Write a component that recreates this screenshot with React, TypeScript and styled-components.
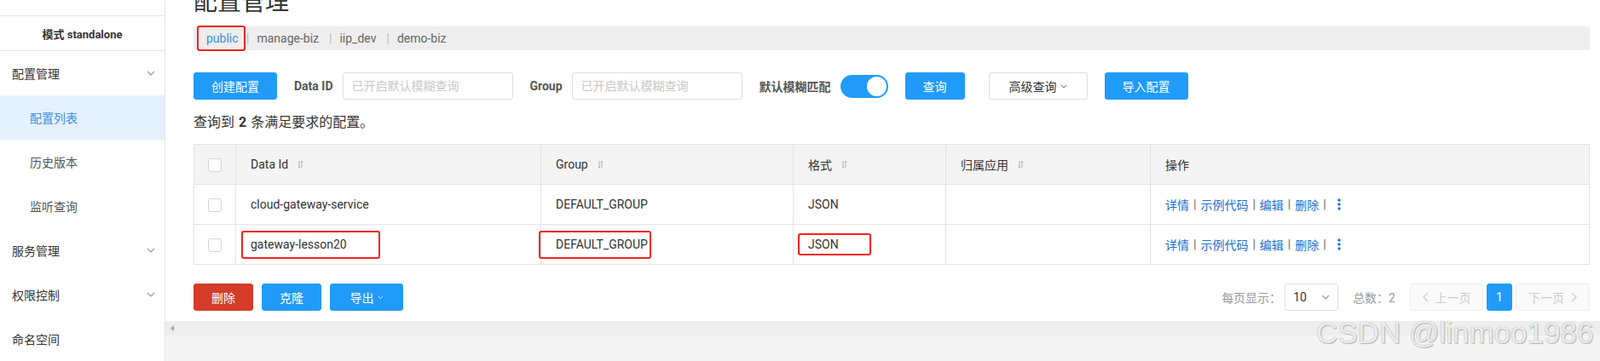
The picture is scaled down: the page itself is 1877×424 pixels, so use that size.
import { styled, createGlobalStyle } from "styled-components";

const GlobalStyle = createGlobalStyle`
    html, body {
        margin: 0;
        padding: 0;
        height: 100%;
        overflow: hidden;
        background: #fff;
    }
    body {
        font-family: Roboto, "Noto Sans CJK SC", sans-serif;
        font-size: 14px;
        color: #333;
    }
    #root {
        height: 100%;
    }
`

const Page = styled.div`
    display: flex;
    position: relative;
    height: 424px;
    width: 1877px;
`

const Sidebar = styled.aside`
    width: 193px;
    flex-shrink: 0;
    border-right: 1px solid #e6e6e6;
    background: #fff;
`

const ModeBox = styled.div`
    margin-top: 18px;
    height: 40px;
    border-top: 1px solid #e6e6e6;
    border-bottom: 1px solid #e6e6e6;

    display: flex;
    align-items: center;
    justify-content: center;

    font-size: 13px;
    font-weight: 700;
    color: #333;
`

const MenuItem = styled.div<{ $sub?: boolean, $active?: boolean }>`
    height: 52px;
    display: flex;
    align-items: center;
    justify-content: space-between;
    padding: 0 11px 0 ${props => props.$sub ? 35 : 14}px;

    font-size: 14px;
    color: ${props => props.$active ? "#3b8fe8" : props.$sub ? "#555" : "#333"};
    background: ${props => props.$active ? "#e5f1fc" : "transparent"};
`

const Main = styled.main`
    flex: 1;
    display: flex;
    flex-direction: column;
    min-width: 0;
`

const Content = styled.div`
    background: #fff;
    padding: 0 12px 12px 33px;
`

const Title = styled.h1`
    margin: -11px 0 0;
    font-size: 28px;
    line-height: 28px;
    font-weight: 400;
    color: #333;
`

const NamespaceBar = styled.div`
    margin-top: 14px;
    height: 28px;
    background: #eee;

    display: flex;
    align-items: center;

    font-size: 14px;
    color: #666;
`

const Namespace = styled.span<{ $current?: boolean }>`
    color: ${props => props.$current ? "#3d8fe6" : "#666"};
`

// red annotation box drawn round a value
const Marked = styled.span<{ $w: number, $h: number, $offset: number, $pad: number }>`
    box-sizing: border-box;
    display: inline-flex;
    align-items: center;
    vertical-align: middle;

    width: ${props => props.$w}px;
    height: ${props => props.$h}px;
    margin-left: ${props => props.$offset}px;
    padding-left: ${props => props.$pad}px;

    border: 2px solid #f2231d;
    border-radius: 3px;
`

const Sep = styled.span<{ $left?: number }>`
    color: #bbb;
    margin: 0 9px 0 ${props => props.$left ?? 12}px;
`

const Toolbar = styled.div`
    margin-top: 26px;
    display: flex;
    align-items: center;
    gap: 20px;
`

const Button = styled.button<{ $kind?: "primary" | "danger" | "normal", $w: number, $push?: number }>`
    box-sizing: border-box;
    height: 32px;
    width: ${props => props.$w}px;
    margin-left: ${props => props.$push ?? 0}px;
    padding: 0;

    display: inline-flex;
    align-items: center;
    justify-content: center;
    gap: 4px;

    font-family: inherit;
    font-size: 14px;
    border-radius: 3px;
    cursor: pointer;

    ${props => props.$kind === "danger" ? `
        background: #d43c28;
        border: 1px solid #d43c28;
        color: #fff;
    ` : props.$kind === "normal" ? `
        background: #fff;
        border: 1px solid #dcdee3;
        color: #333;
    ` : `
        background: #209bfa;
        border: 1px solid #209bfa;
        color: #fff;
    `}
`

const FormItem = styled.label`
    display: flex;
    align-items: center;
    gap: 11px;
`

const FormLabel = styled.span`
    font-size: 14px;
    font-weight: 700;
    color: #555;
`

const Input = styled.input`
    box-sizing: border-box;
    width: 200px;
    height: 32px;
    padding: 0 10px;

    border: 1px solid #dcdee3;
    border-radius: 3px;
    outline: none;

    font-family: inherit;
    font-size: 14px;
    color: #333;

    &::placeholder {
        color: #c8c8c8;
    }
`

const Switch = styled.span`
    box-sizing: border-box;
    width: 56px;
    height: 27px;
    border-radius: 14px;
    background: #209bfa;
    padding: 2px;

    display: flex;
    justify-content: flex-end;
`

const Knob = styled.span`
    width: 23px;
    height: 23px;
    border-radius: 50%;
    background: #fff;
`

const Summary = styled.div`
    margin-top: 17px;
    line-height: 20px;
    font-size: 16px;
    color: #333;

    b {
        font-size: 16px;
        margin: 0 5px;
    }
`

const Table = styled.table`
    margin-top: 15px;
    width: 100%;
    table-layout: fixed;
    border-collapse: collapse;
    border: 1px solid #e3e3e3;
`

const HeadCell = styled.th`
    height: 46px;
    padding: 0 0 0 17px;
    background: #f4f4f4;
    border: 1px solid #e3e3e3;

    text-align: left;
    font-weight: 400;
    font-size: 14px;
    color: #333;
`

const Cell = styled.td`
    height: 46px;
    padding: 0 0 0 17px;
    border: 1px solid #e3e3e3;

    font-size: 14px;
    color: #333;
    white-space: nowrap;
`

const CheckCell = styled.td`
    height: 46px;
    padding: 0;
    border: 1px solid #e3e3e3;
    text-align: center;
`

const CheckHead = styled(CheckCell).attrs({ as: "th" })`
    background: #f4f4f4;
`

const Checkbox = styled.span`
    box-sizing: border-box;
    display: inline-block;
    vertical-align: middle;
    width: 16px;
    height: 16px;
    border: 1px solid #d4d6db;
    border-radius: 3px;
    background: #fff;
`

const SortLabel = styled.span`
    display: inline-flex;
    align-items: center;
    gap: 11px;
`

const Actions = styled.span`
    display: inline-flex;
    align-items: center;
    color: #1b6fd3;
`

const ActionSep = styled.span`
    color: #666;
    margin: 0 5px;
`

const More = styled.span`
    display: flex;
    margin-left: 8px;
`

const BottomBar = styled.div`
    margin-top: 22px;
    display: flex;
    align-items: center;
    justify-content: space-between;
`

const ButtonGroup = styled.div`
    display: flex;
    gap: 10px;
`

const Pager = styled.div`
    display: flex;
    align-items: center;
    gap: 4px;
    font-size: 14px;
    color: #999;
`

const Select = styled.span`
    box-sizing: border-box;
    width: 63px;
    height: 32px;
    margin-right: 13px;
    padding: 0 9px;

    display: flex;
    align-items: center;
    justify-content: space-between;

    border: 1px solid #dcdee3;
    border-radius: 3px;
    color: #333;
`

const PageButton = styled.span<{ $w: number, $current?: boolean }>`
    box-sizing: border-box;
    width: ${props => props.$w}px;
    height: 32px;

    display: flex;
    align-items: center;
    justify-content: center;
    gap: 8px;

    border-radius: 3px;
    border: 1px solid ${props => props.$current ? "#209bfa" : "#eee"};
    background: ${props => props.$current ? "#209bfa" : "#fafafa"};
    color: ${props => props.$current ? "#fff" : "#ccc"};
`

const Total = styled.span`
    margin-right: 13px;
`

const ScrollTrack = styled.div`
    height: 17px;
    background: #eee;
    display: flex;
    align-items: center;
    padding-left: 6px;
`

const Footer = styled.div`
    flex: 1;
    background: #f4f4f4;
`

const Watermark = styled.div`
    position: absolute;
    left: 1544px;
    top: 371px;
    font-family: "Liberation Sans", Arial, sans-serif;
    font-size: 35px;
    line-height: 40px;
    color: #ececec;
    text-shadow: 0 0 1px #9a9a9a, 1px 1px 1px #b5b5b5;
    white-space: nowrap;
    pointer-events: none;
`

const Chevron = ({ color = "#999", size = 10 }: { color?: string, size?: number }) => (
    <svg width={size} height={size * 0.6} viewBox="0 0 10 6">
        <path d="M1 1l4 4 4-4" fill="none" stroke={color} strokeWidth="1.2" />
    </svg>
)

const ChevronSide = ({ dir }: { dir: "left" | "right" }) => (
    <svg width="7" height="12" viewBox="0 0 7 12">
        <path d={dir === "left" ? "M6 1L1 6l5 5" : "M1 1l5 5-5 5"} fill="none" stroke="#ccc" strokeWidth="1.3" />
    </svg>
)

const SortIcon = () => (
    <svg width="7" height="10" viewBox="0 0 7 10">
        <path d="M2 1v8M0.8 7.6L2 9l1.2-1.4M5 9V1M3.8 2.4L5 1l1.2 1.4" fill="none" stroke="#a8a8a8" strokeWidth="0.9" />
    </svg>
)

const MoreIcon = () => (
    <svg width="4" height="14" viewBox="0 0 4 14">
        <circle cx="2" cy="2" r="1.7" fill="#1b6fd3" />
        <circle cx="2" cy="7" r="1.7" fill="#1b6fd3" />
        <circle cx="2" cy="12" r="1.7" fill="#1b6fd3" />
    </svg>
)

const rows = [
    { id: "cloud-gateway-service", group: "DEFAULT_GROUP", type: "JSON", marked: false },
    { id: "gateway-lesson20", group: "DEFAULT_GROUP", type: "JSON", marked: true },
]

const menu = [
    { label: "配置管理", arrow: true },
    { label: "配置列表", sub: true, active: true },
    { label: "历史版本", sub: true },
    { label: "监听查询", sub: true },
    { label: "服务管理", arrow: true },
    { label: "权限控制", arrow: true },
    { label: "命名空间" },
]

const App = () => {
    return (
        <Page>
            <GlobalStyle />
            <Sidebar>
                <ModeBox>模式 standalone</ModeBox>
                {menu.map(item => (
                    <MenuItem key={item.label} $sub={item.sub} $active={item.active}>
                        <span>{item.label}</span>
                        {item.arrow && <Chevron />}
                    </MenuItem>
                ))}
            </Sidebar>
            <Main>
                <Content>
                    <Title>配置管理</Title>
                    <NamespaceBar>
                        <Marked $w={57} $h={30} $offset={4} $pad={9}>
                            <Namespace $current>public</Namespace>
                        </Marked>
                        <Sep $left={1}>|</Sep>
                        <Namespace>manage-biz</Namespace>
                        <Sep>|</Sep>
                        <Namespace>iip_dev</Namespace>
                        <Sep>|</Sep>
                        <Namespace>demo-biz</Namespace>
                    </NamespaceBar>
                    <Toolbar>
                        <Button $w={98}>创建配置</Button>
                        <FormItem>
                            <FormLabel>Data ID</FormLabel>
                            <Input placeholder="已开启默认模糊查询" />
                        </FormItem>
                        <FormItem>
                            <FormLabel>Group</FormLabel>
                            <Input placeholder="已开启默认模糊查询" />
                        </FormItem>
                        <FormItem>
                            <FormLabel>默认模糊匹配</FormLabel>
                            <Switch><Knob /></Switch>
                        </FormItem>
                        <Button $w={70}>查询</Button>
                        <Button $w={116} $kind="normal" $push={8}>
                            高级查询 <Chevron color="#666" size={8} />
                        </Button>
                        <Button $w={98}>导入配置</Button>
                    </Toolbar>
                    <Summary>查询到<b>2</b>条满足要求的配置。</Summary>
                    <Table>
                        <colgroup>
                            <col style={{ width: 49 }} />
                            <col style={{ width: 358 }} />
                            <col style={{ width: 296 }} />
                            <col style={{ width: 179 }} />
                            <col style={{ width: 240 }} />
                            <col />
                        </colgroup>
                        <thead>
                            <tr>
                                <CheckHead><Checkbox /></CheckHead>
                                <HeadCell><SortLabel>Data Id <SortIcon /></SortLabel></HeadCell>
                                <HeadCell><SortLabel>Group <SortIcon /></SortLabel></HeadCell>
                                <HeadCell><SortLabel>格式 <SortIcon /></SortLabel></HeadCell>
                                <HeadCell><SortLabel>归属应用 <SortIcon /></SortLabel></HeadCell>
                                <HeadCell>操作</HeadCell>
                            </tr>
                        </thead>
                        <tbody>
                            {rows.map(row => (
                                <tr key={row.id}>
                                    <CheckCell><Checkbox /></CheckCell>
                                    <Cell>
                                        {row.marked
                                            ? <Marked $w={163} $h={33} $offset={-11} $pad={9}>{row.id}</Marked>
                                            : row.id}
                                    </Cell>
                                    <Cell>
                                        {row.marked
                                            ? <Marked $w={132} $h={33} $offset={-20} $pad={18}>{row.group}</Marked>
                                            : row.group}
                                    </Cell>
                                    <Cell>
                                        {row.marked
                                            ? <Marked $w={86} $h={26} $offset={-12} $pad={10}>{row.type}</Marked>
                                            : row.type}
                                    </Cell>
                                    <Cell />
                                    <Cell>
                                        <Actions>
                                            详情<ActionSep>|</ActionSep>
                                            示例代码<ActionSep>|</ActionSep>
                                            编辑<ActionSep>|</ActionSep>
                                            删除<ActionSep>|</ActionSep>
                                            <More><MoreIcon /></More>
                                        </Actions>
                                    </Cell>
                                </tr>
                            ))}
                        </tbody>
                    </Table>
                    <BottomBar>
                        <ButtonGroup>
                            <Button $w={70} $kind="danger">删除</Button>
                            <Button $w={70}>克隆</Button>
                            <Button $w={86}>导出<Chevron color="#fff" size={7} /></Button>
                        </ButtonGroup>
                        <Pager>
                            每页显示：
                            <Select>10 <Chevron color="#999" size={10} /></Select>
                            <Total>总数：2</Total>
                            <PageButton $w={86}><ChevronSide dir="left" />上一页</PageButton>
                            <PageButton $w={30} $current>1</PageButton>
                            <PageButton $w={87}>下一页<ChevronSide dir="right" /></PageButton>
                        </Pager>
                    </BottomBar>
                </Content>
                <ScrollTrack>
                    <svg width="4" height="7" viewBox="0 0 4 7"><path d="M4 0v7L0 3.5z" fill="#a3a3a3" /></svg>
                </ScrollTrack>
                <Footer />
            </Main>
            <Watermark>CSDN @linmoo1986</Watermark>
        </Page>
    );
}

export default App;
